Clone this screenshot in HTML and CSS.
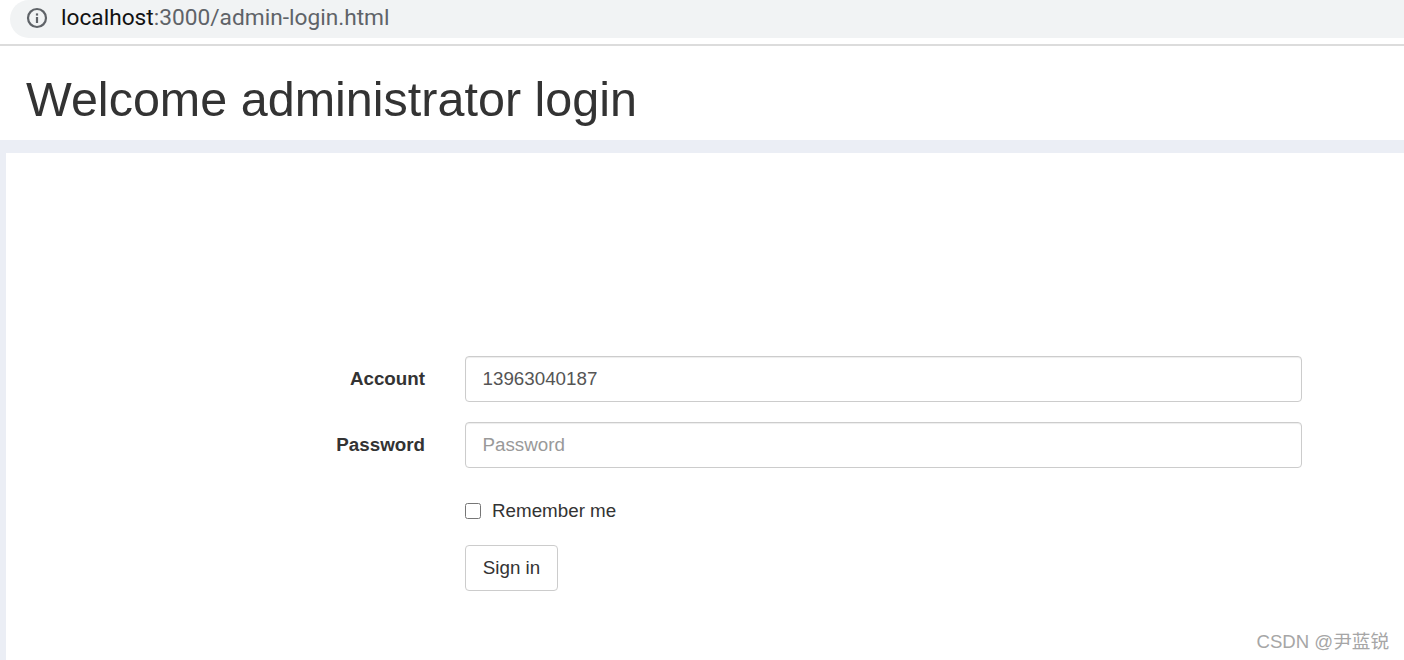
FILE: index.html
```html
<!DOCTYPE html>
<html lang="en">
<head>
<meta charset="utf-8">
<title>Administrator login</title>
<link rel="stylesheet" href="styles.css">
</head>
<body>
<div class="chrome">
  <div class="omnibox">
    <svg class="info" width="22" height="22" viewBox="0 0 22 22" aria-hidden="true">
      <circle cx="11" cy="11" r="9" fill="none" stroke="#5f6368" stroke-width="2.2"/>
      <rect x="9.9" y="10" width="2.2" height="6" fill="#5f6368"/>
      <rect x="9.9" y="6.4" width="2.2" height="2.2" fill="#5f6368"/>
    </svg>
    <span class="url"><span class="host">localhost</span>:3000/admin-login.html</span>
  </div>
</div>
<header class="page-head">
  <h1 class="title">Welcome administrator login</h1>
</header>
<main class="shell">
  <form class="panel">
    <div class="row">
      <label class="label" for="account">Account</label>
      <input class="field" id="account" type="text" value="13963040187">
    </div>
    <div class="row">
      <label class="label" for="password">Password</label>
      <input class="field" id="password" type="password" placeholder="Password">
    </div>
    <label class="remember"><input class="check" type="checkbox"><span>Remember me</span></label>
    <button class="btn" type="button">Sign in</button>
  </form>
</main>
<div class="mark">CSDN @尹蓝锐</div>
</body>
</html>
```
FILE: styles.css
```css
* { box-sizing: border-box; }
html, body { margin: 0; height: 660px; overflow: hidden; background: #fff; }
body { font-family: "Liberation Sans", Arial, sans-serif; color: #333; position: relative; }

.chrome { height: 46px; padding-left: 10px; border-bottom: 2px solid #dcdcdc; }
.omnibox {
  height: 38px; background: #f1f3f4; border-radius: 19px 0 0 19px;
  display: flex; align-items: center; padding: 0 0 3px 16px; gap: 13px;
}
.info { flex: none; }
.url { font-family: "Roboto", "Noto Sans", sans-serif; font-size: 22.7px; color: #5f6368; white-space: nowrap; }
.host { color: #111; }

.page-head { height: 94px; padding: 14px 0 0 26px; display: flex; align-items: center; }
.title { margin: 0; font-size: 48.5px; font-weight: 400; line-height: 1.1; color: #333; }

.shell { height: 520px; background: #ebeef5; padding: 13px 0 0 6px; }
.panel { height: 100%; background: #fff; padding: 203px 102px 0 0; }

.row { display: flex; align-items: center; gap: 40px; margin-bottom: 20px; }
.label { width: 419px; flex: none; text-align: right; font-size: 18.8px; font-weight: 700; color: #333; }
.field {
  flex: 1; min-width: 0; height: 46px; padding: 0 16.5px;
  border: 1px solid #ccc; border-radius: 4px; background: #fff;
  font: 18.8px "Liberation Sans", Arial, sans-serif; color: #555;
  box-shadow: inset 0 1px 1px rgba(0,0,0,.075);
}
.field::placeholder { color: #999; opacity: 1; }

.remember {
  display: flex; align-items: center; gap: 11px; margin: 32px 0 0 459px;
  height: 22px; font-size: 18.8px; color: #333;
}
.check { width: 16px; height: 16px; margin: 0; flex: none; }

.btn {
  display: block; margin: 23px 0 0 459px; width: 93px; height: 46px; padding: 0;
  background: #fff; border: 1px solid #ccc; border-radius: 4px;
  font: 18.8px "Liberation Sans", Arial, sans-serif; color: #333;
}

.mark {
  position: absolute; right: 15px; top: 626px;
  font: 18.6px "Liberation Sans", "Noto Sans CJK SC", sans-serif; color: #a6a6a6;
}
```
